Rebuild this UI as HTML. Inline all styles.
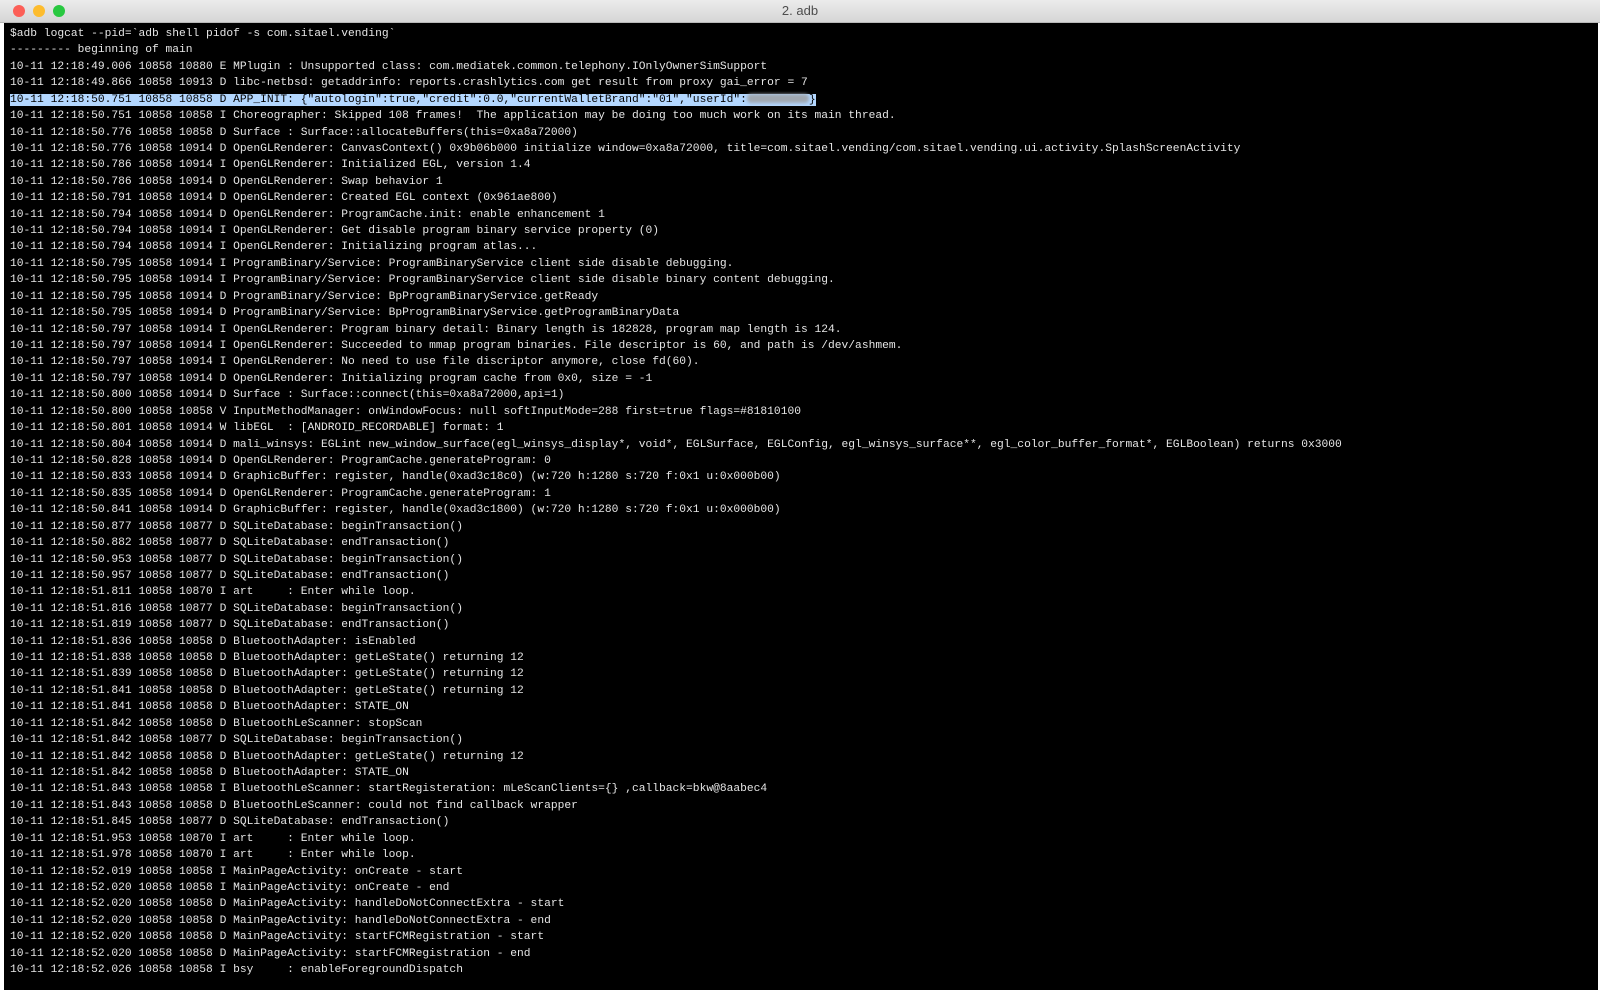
<!DOCTYPE html>
<html><head><meta charset="utf-8"><style>
html,body{margin:0;padding:0;background:#fff;}
body{width:1600px;height:992px;overflow:hidden;position:relative;}
#win{position:absolute;left:4px;top:0;width:1594px;height:990px;background:#000;}
#title{position:absolute;left:0;top:0;width:1600px;height:22px;background:linear-gradient(#ececec,#d6d6d6);border-bottom:1px solid #b8b8b8;font:13px "Liberation Sans",sans-serif;color:#4d4d4d;text-align:center;line-height:22px;}
.dot{position:absolute;top:5px;width:12px;height:12px;border-radius:50%;}
#term{position:absolute;left:10px;top:26px;font:11.27px/16.42px "Liberation Mono",monospace;color:#e6e6e6;white-space:pre;}
.hl{background:#b3d7ff;color:#000;}
.blur{display:inline-block;width:62px;height:9px;background:#a0a8b2;vertical-align:middle;border-radius:4px;filter:blur(1.5px);}
</style></head><body>
<div id="win"></div>
<div id="title">2. adb
<div class="dot" style="left:13px;background:#fc5f57;"></div>
<div class="dot" style="left:33px;background:#fdbc2e;"></div>
<div class="dot" style="left:53px;background:#28c840;"></div>
</div>
<div id="term">$adb logcat --pid=`adb shell pidof -s com.sitael.vending`
--------- beginning of main
10-11 12:18:49.006 10858 10880 E MPlugin : Unsupported class: com.mediatek.common.telephony.IOnlyOwnerSimSupport
10-11 12:18:49.866 10858 10913 D libc-netbsd: getaddrinfo: reports.crashlytics.com get result from proxy gai_error = 7
<span class="hl">10-11 12:18:50.751 10858 10858 D APP_INIT: {"autologin":true,"credit":0.0,"currentWalletBrand":"01","userId":<span class="blur"></span>}</span>
10-11 12:18:50.751 10858 10858 I Choreographer: Skipped 108 frames!  The application may be doing too much work on its main thread.
10-11 12:18:50.776 10858 10858 D Surface : Surface::allocateBuffers(this=0xa8a72000)
10-11 12:18:50.776 10858 10914 D OpenGLRenderer: CanvasContext() 0x9b06b000 initialize window=0xa8a72000, title=com.sitael.vending/com.sitael.vending.ui.activity.SplashScreenActivity
10-11 12:18:50.786 10858 10914 I OpenGLRenderer: Initialized EGL, version 1.4
10-11 12:18:50.786 10858 10914 D OpenGLRenderer: Swap behavior 1
10-11 12:18:50.791 10858 10914 D OpenGLRenderer: Created EGL context (0x961ae800)
10-11 12:18:50.794 10858 10914 D OpenGLRenderer: ProgramCache.init: enable enhancement 1
10-11 12:18:50.794 10858 10914 I OpenGLRenderer: Get disable program binary service property (0)
10-11 12:18:50.794 10858 10914 I OpenGLRenderer: Initializing program atlas...
10-11 12:18:50.795 10858 10914 I ProgramBinary/Service: ProgramBinaryService client side disable debugging.
10-11 12:18:50.795 10858 10914 I ProgramBinary/Service: ProgramBinaryService client side disable binary content debugging.
10-11 12:18:50.795 10858 10914 D ProgramBinary/Service: BpProgramBinaryService.getReady
10-11 12:18:50.795 10858 10914 D ProgramBinary/Service: BpProgramBinaryService.getProgramBinaryData
10-11 12:18:50.797 10858 10914 I OpenGLRenderer: Program binary detail: Binary length is 182828, program map length is 124.
10-11 12:18:50.797 10858 10914 I OpenGLRenderer: Succeeded to mmap program binaries. File descriptor is 60, and path is /dev/ashmem.
10-11 12:18:50.797 10858 10914 I OpenGLRenderer: No need to use file discriptor anymore, close fd(60).
10-11 12:18:50.797 10858 10914 D OpenGLRenderer: Initializing program cache from 0x0, size = -1
10-11 12:18:50.800 10858 10914 D Surface : Surface::connect(this=0xa8a72000,api=1)
10-11 12:18:50.800 10858 10858 V InputMethodManager: onWindowFocus: null softInputMode=288 first=true flags=#81810100
10-11 12:18:50.801 10858 10914 W libEGL  : [ANDROID_RECORDABLE] format: 1
10-11 12:18:50.804 10858 10914 D mali_winsys: EGLint new_window_surface(egl_winsys_display*, void*, EGLSurface, EGLConfig, egl_winsys_surface**, egl_color_buffer_format*, EGLBoolean) returns 0x3000
10-11 12:18:50.828 10858 10914 D OpenGLRenderer: ProgramCache.generateProgram: 0
10-11 12:18:50.833 10858 10914 D GraphicBuffer: register, handle(0xad3c18c0) (w:720 h:1280 s:720 f:0x1 u:0x000b00)
10-11 12:18:50.835 10858 10914 D OpenGLRenderer: ProgramCache.generateProgram: 1
10-11 12:18:50.841 10858 10914 D GraphicBuffer: register, handle(0xad3c1800) (w:720 h:1280 s:720 f:0x1 u:0x000b00)
10-11 12:18:50.877 10858 10877 D SQLiteDatabase: beginTransaction()
10-11 12:18:50.882 10858 10877 D SQLiteDatabase: endTransaction()
10-11 12:18:50.953 10858 10877 D SQLiteDatabase: beginTransaction()
10-11 12:18:50.957 10858 10877 D SQLiteDatabase: endTransaction()
10-11 12:18:51.811 10858 10870 I art     : Enter while loop.
10-11 12:18:51.816 10858 10877 D SQLiteDatabase: beginTransaction()
10-11 12:18:51.819 10858 10877 D SQLiteDatabase: endTransaction()
10-11 12:18:51.836 10858 10858 D BluetoothAdapter: isEnabled
10-11 12:18:51.838 10858 10858 D BluetoothAdapter: getLeState() returning 12
10-11 12:18:51.839 10858 10858 D BluetoothAdapter: getLeState() returning 12
10-11 12:18:51.841 10858 10858 D BluetoothAdapter: getLeState() returning 12
10-11 12:18:51.841 10858 10858 D BluetoothAdapter: STATE_ON
10-11 12:18:51.842 10858 10858 D BluetoothLeScanner: stopScan
10-11 12:18:51.842 10858 10877 D SQLiteDatabase: beginTransaction()
10-11 12:18:51.842 10858 10858 D BluetoothAdapter: getLeState() returning 12
10-11 12:18:51.842 10858 10858 D BluetoothAdapter: STATE_ON
10-11 12:18:51.843 10858 10858 I BluetoothLeScanner: startRegisteration: mLeScanClients={} ,callback=bkw@8aabec4
10-11 12:18:51.843 10858 10858 D BluetoothLeScanner: could not find callback wrapper
10-11 12:18:51.845 10858 10877 D SQLiteDatabase: endTransaction()
10-11 12:18:51.953 10858 10870 I art     : Enter while loop.
10-11 12:18:51.978 10858 10870 I art     : Enter while loop.
10-11 12:18:52.019 10858 10858 I MainPageActivity: onCreate - start
10-11 12:18:52.020 10858 10858 I MainPageActivity: onCreate - end
10-11 12:18:52.020 10858 10858 D MainPageActivity: handleDoNotConnectExtra - start
10-11 12:18:52.020 10858 10858 D MainPageActivity: handleDoNotConnectExtra - end
10-11 12:18:52.020 10858 10858 D MainPageActivity: startFCMRegistration - start
10-11 12:18:52.020 10858 10858 D MainPageActivity: startFCMRegistration - end
10-11 12:18:52.026 10858 10858 I bsy     : enableForegroundDispatch</div>
</body></html>
